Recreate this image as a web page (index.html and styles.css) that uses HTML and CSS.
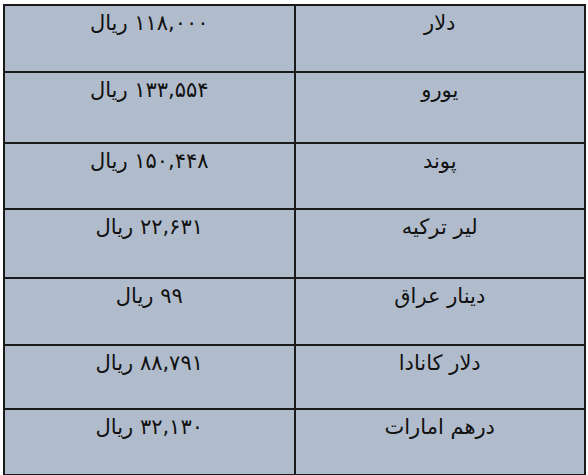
FILE: index.html
```html
<!DOCTYPE html>
<html lang="fa" dir="rtl">
<head>
<meta charset="utf-8">
<link rel="stylesheet" href="styles.css">
</head>
<body>
<table class="rates">
<tr class="r1"><td>دلار</td><td>۱۱۸,۰۰۰ ریال</td></tr>
<tr class="r2"><td>یورو</td><td>۱۳۳,۵۵۴ ریال</td></tr>
<tr class="r3"><td>پوند</td><td>۱۵۰,۴۴۸ ریال</td></tr>
<tr class="r4"><td>لیر ترکیه</td><td>۲۲,۶۳۱ ریال</td></tr>
<tr class="r5"><td>دینار عراق</td><td>۹۹ ریال</td></tr>
<tr class="r6"><td>دلار کانادا</td><td>۸۸,۷۹۱ ریال</td></tr>
<tr class="r7"><td>درهم امارات</td><td>۳۲,۱۳۰ ریال</td></tr>
</table>
</body>
</html>
```
FILE: styles.css
```css
html, body {
  margin: 0;
  padding: 0;
  background: #ffffff;
}
body {
  padding: 4px 2px 0 3px;
}
.rates {
  width: 583px;
  border-collapse: collapse;
  background: #b0bccc;
  font-family: "DejaVu Sans", sans-serif;
  font-size: 21px;
  color: #111;
  table-layout: fixed;
}
.rates td {
  border: 2px solid #1a1a1a;
  width: 50%;
  text-align: center;
  vertical-align: top;
  padding: 5px 0 0 0;
  box-sizing: border-box;
}
.rates tr { height: 67px; }
.rates .r2 { height: 71px; }
.rates .r3 { height: 66px; }
.rates .r4 { height: 69px; }
.rates .r5 { height: 67px; }
.rates .r6 { height: 64px; }
.rates .r7 { height: 66px; }
```
